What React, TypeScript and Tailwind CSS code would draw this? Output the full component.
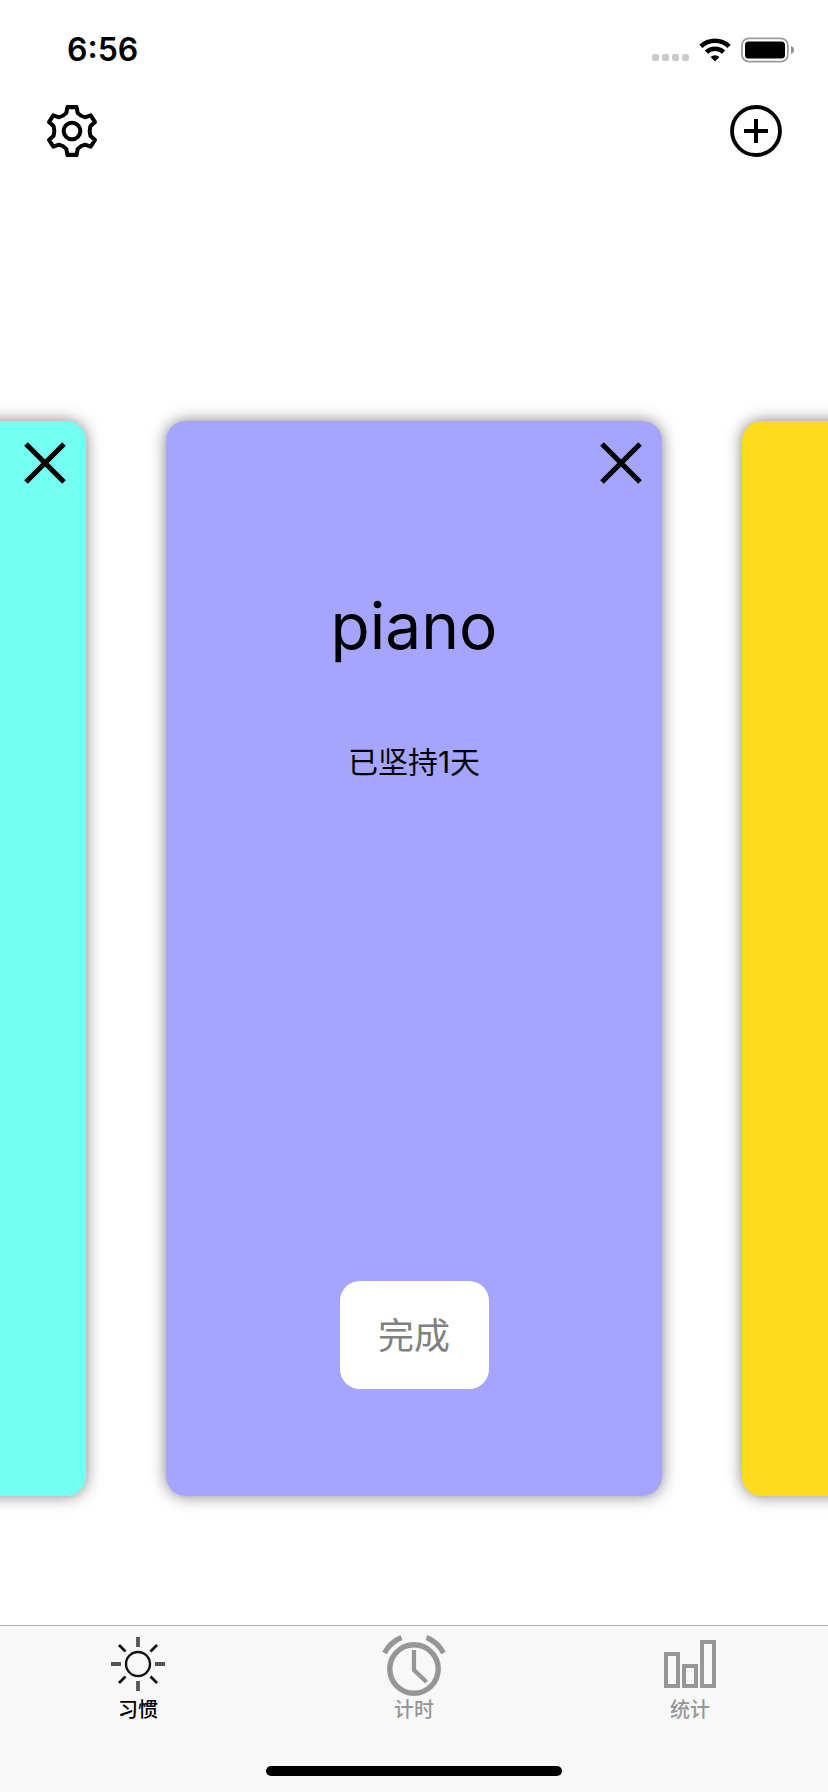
import React from "react";

const fontStack = "font-['Inter','Noto_Sans_CJK_SC',sans-serif]";

function StatusBar() {
  return (
    <div className="flex h-[99px] items-center justify-between pl-[67px] pr-[34px]">
      <span className="text-[32px] font-semibold leading-[38px]">6:56</span>
      <div className="flex items-center gap-[10px]">
        <svg className="mt-4 h-[7px] w-[37px] fill-[#cbcbcb]" viewBox="0 0 37 7" aria-hidden="true">
          <rect x="0" width="7" height="7" rx="2" />
          <rect x="10" width="7" height="7" rx="2" />
          <rect x="20" width="7" height="7" rx="2" />
          <rect x="30" width="7" height="7" rx="2" />
        </svg>
        <svg className="h-6 w-8" viewBox="0 0 32 24" fill="none" stroke="#000" aria-hidden="true">
          <path d="M1.9 8.3 A20.5 20.5 0 0 1 30.1 8.3" strokeWidth="4.6" />
          <path d="M7.4 14.2 A12.4 12.4 0 0 1 24.6 14.2" strokeWidth="4.6" />
          <path d="M11.6 19 A6.3 6.3 0 0 1 20.4 19 L16 23.6 Z" fill="#000" stroke="none" />
        </svg>
        <svg className="h-[26px] w-[53px]" viewBox="0 0 53 26" aria-hidden="true">
          <rect x="0.9" y="1.4" width="46" height="23.2" rx="7" fill="none" stroke="#9b9b9b" strokeWidth="1.8" />
          <rect x="4" y="4.5" width="40" height="17" rx="3.5" />
          <path d="M50 9 Q53 10 53 13 Q53 16 50 17 Z" fill="#8e8e8e" />
        </svg>
      </div>
    </div>
  );
}

function GearIcon() {
  return (
    <svg className="size-[52px]" viewBox="-78 -78 156 156" fill="none" stroke="#000" strokeWidth="12" strokeLinejoin="round" aria-hidden="true">
      <path d="M-14 -71 H14 L17 -54 Q26 -44 39 -41 L56 -47 L69 -27 L55 -14 Q51 0 55 14 L69 27 L56 47 L39 41 Q26 44 17 54 L14 71 H-14 L-17 54 Q-26 44 -39 41 L-56 47 L-69 27 L-55 14 Q-51 0 -55 -14 L-69 -27 L-56 -47 L-39 -41 Q-26 -44 -17 -54 Z" />
      <path d="M-18 -73 H18 M-18 73 H18" strokeWidth="10" />
      <circle r="25" strokeWidth="12" />
    </svg>
  );
}

function PlusIcon() {
  return (
    <svg className="size-[52px]" viewBox="0 0 52 52" fill="none" stroke="#000" aria-hidden="true">
      <circle cx="26" cy="26" r="24" strokeWidth="3.8" />
      <path d="M14 26 H38 M26 14 V38" strokeWidth="4" />
    </svg>
  );
}

function CloseButton() {
  return (
    <button type="button" aria-label="删除" className="size-[42px]">
      <svg className="size-[42px]" viewBox="0 0 42 42" stroke="#000" strokeWidth="5.2" aria-hidden="true">
        <path d="M2 2 L40 40 M40 2 L2 40" />
      </svg>
    </button>
  );
}

function Card({ color, children }: { color: string; children?: React.ReactNode }) {
  return (
    <article className={`flex h-[60vh] w-[60%] shrink-0 flex-col rounded-[20px] px-5 pt-[21px] pb-[107px] shadow-[0_0_16px_rgba(0,0,0,0.5)] ${color}`}>
      <div className="flex justify-end">
        <CloseButton />
      </div>
      {children}
    </article>
  );
}

function SunIcon() {
  return (
    <svg className="h-14 w-[54px]" viewBox="-27 -27 54 56" fill="none" stroke="#111" aria-hidden="true">
      <circle r="12" strokeWidth="2.4" />
      <path d="M0 -27 V-17 M0 17 V27 M-27 0 H-17 M17 0 H27" stroke="#555" strokeWidth="3.8" />
      <path d="M-19 -19 L-12.5 -12.5 M19 -19 L12.5 -12.5 M-19 19 L-12.5 12.5 M19 19 L12.5 12.5" strokeWidth="2.8" />
    </svg>
  );
}

function ClockIcon() {
  return (
    <svg className="h-[62px] w-16" viewBox="-32 -35 64 62" fill="none" stroke="#969696" aria-hidden="true">
      <circle r="24.2" strokeWidth="5.4" />
      <path d="M0 -19 V1 L12.5 13" strokeWidth="4.2" />
      <path d="M-29.5 -16 Q-23.5 -27 -12.5 -31.5 M29.5 -16 Q23.5 -27 12.5 -31.5" strokeWidth="5.2" />
    </svg>
  );
}

function ChartIcon() {
  return (
    <svg className="h-[50px] w-[52px]" viewBox="0 0 52 50" fill="none" stroke="#969696" strokeWidth="4" aria-hidden="true">
      <path d="M2 14 H14 V46 H2 Z M20 26 H32 V46 H20 Z M38 2 H50 V46 H38 Z" />
    </svg>
  );
}

function Tab({ label, active, children }: { label: string; active?: boolean; children: React.ReactNode }) {
  return (
    <a href="#" aria-current={active ? "page" : undefined} className={`flex flex-1 flex-col items-center text-xl font-medium leading-7 ${active ? "text-black" : "text-[#969696]"}`}>
      <span className="flex h-[70px] items-center justify-center pt-2">{children}</span>
      {label}
    </a>
  );
}

export default function App() {
  return (
    <div className={`flex min-h-screen flex-col overflow-hidden bg-white text-black ${fontStack}`}>
      <StatusBar />
      <header className="flex items-center justify-between px-[46px] pt-[6px]">
        <button type="button" aria-label="设置"><GearIcon /></button>
        <button type="button" aria-label="添加"><PlusIcon /></button>
      </header>

      <main className="flex flex-1 items-start justify-center gap-20 overflow-hidden pt-[264px] pb-10">
        <Card color="bg-[#73fff2]" />
        <Card color="bg-[#a5a5ff]">
          <h1 className="mt-[102px] text-center text-[64px] leading-[80px]">piano</h1>
          <p className="mt-[74px] text-center text-[30px] leading-[44px]">已坚持1天</p>
          <button type="button" className="mx-auto mt-auto h-[108px] w-[149px] rounded-[20px] bg-white pt-[2px] text-4xl text-[#808080]">
            完成
          </button>
        </Card>
        <Card color="bg-[#ffdb1e]" />
      </main>

      <footer className="border-t border-[#adadad] bg-[#f8f8f8]">
        <nav className="flex">
          <Tab label="习惯" active><SunIcon /></Tab>
          <Tab label="计时"><ClockIcon /></Tab>
          <Tab label="统计"><ChartIcon /></Tab>
        </nav>
        <div className="mx-auto mt-[42px] mb-4 h-[10px] w-[296px] rounded-full bg-black" />
      </footer>
    </div>
  );
}
